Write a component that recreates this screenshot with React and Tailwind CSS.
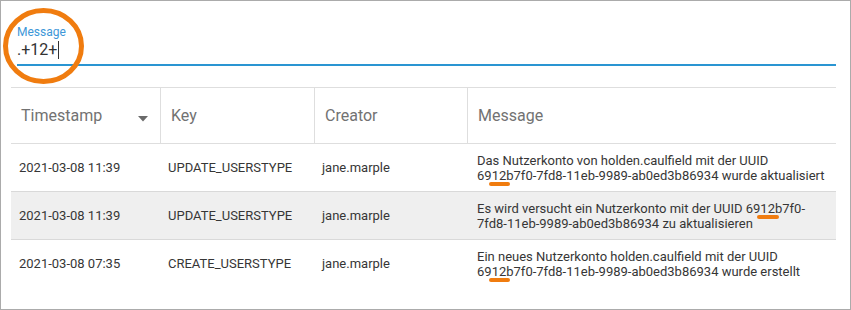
import React from "react";

const rows = [
  {
    ts: "2021-03-08 11:39",
    key: "UPDATE_USERSTYPE",
    creator: "jane.marple",
    lines: [
      ["Das Nutzerkonto von holden.caulfield mit der UUID"],
      ["69", "12", "b7f0-7fd8-11eb-9989-ab0ed3b86934 wurde aktualisiert"],
    ],
  },
  {
    ts: "2021-03-08 11:39",
    key: "UPDATE_USERSTYPE",
    creator: "jane.marple",
    lines: [
      ["Es wird versucht ein Nutzerkonto mit der UUID 69", "12", "b7f0-"],
      ["7fd8-11eb-9989-ab0ed3b86934 zu aktualisieren"],
    ],
  },
  {
    ts: "2021-03-08 07:35",
    key: "CREATE_USERSTYPE",
    creator: "jane.marple",
    lines: [
      ["Ein neues Nutzerkonto holden.caulfield mit der UUID"],
      ["69", "12", "b7f0-7fd8-11eb-9989-ab0ed3b86934 wurde erstellt"],
    ],
  },
];

// orange marker under the matched "12"
function Hit({ children }) {
  return (
    <span className="relative">
      {children}
      <span className="absolute left-[-3px] right-[-4px] top-[14px] h-[4px] rounded-full bg-[#f07c0f]" />
    </span>
  );
}

function Line({ parts }) {
  return (
    <span className="block whitespace-nowrap">
      {parts.map((p, i) => (i === 1 ? <Hit key={i}>{p}</Hit> : <span key={i}>{p}</span>))}
    </span>
  );
}

export default function App() {
  return (
    <div
      className="relative w-[851px] h-[310px] border border-[#ababab] bg-white overflow-hidden"
      style={{ fontFamily: "Roboto, 'Liberation Sans', sans-serif" }}
    >
      {/* SEARCH FIELD */}
      <div className="ml-[16px] mt-[24px] w-[819px] border-b-2 border-[#2a95d2] pb-[4px]">
        <div className="h-[14px] text-[12px] leading-[14px] text-[#3d97d8]">Message</div>
        <div className="mt-[1px] flex items-center h-[20px] text-[16px] leading-[20px] text-[#333]">
          .+12+
          <span className="inline-block w-[1px] h-[18px] bg-[#333] ml-[1px]" />
        </div>
      </div>

      {/* TABLE */}
      <div className="ml-[10px] mt-[21px] w-[825px]">
        <div className="grid grid-cols-[149px_154px_153px_369px] h-[57px] border-y border-[#dedede] text-[16px] text-[#727272]">
          <div className="flex items-center pl-[10px] pr-[12px] justify-between">
            <span>Timestamp</span>
            <svg width="10" height="6" viewBox="0 0 10 6" className="mt-[7px]">
              <path d="M0 0 L10 0 L5 5.5 Z" fill="#6a6a6a" />
            </svg>
          </div>
          <div className="flex items-center pl-[10px] border-l border-[#dedede]">Key</div>
          <div className="flex items-center pl-[10px] border-l border-[#dedede]">Creator</div>
          <div className="flex items-center pl-[10px] border-l border-[#dedede]">Message</div>
        </div>

        {rows.map((r, i) => (
          <div
            key={i}
            className={
              "grid grid-cols-[149px_154px_153px_369px] h-[48px] text-[13px] text-[#363636] " +
              (i === 1 ? "bg-[#efefef] " : "") +
              (i < 2 ? "border-b border-[#d9d9d9]" : "")
            }
          >
            <div className="flex items-center pl-[8px]">{r.ts}</div>
            <div className="flex items-center pl-[8px]">{r.key}</div>
            <div className="flex items-center pl-[8px]">{r.creator}</div>
            <div className="flex flex-col justify-center pl-[10px] leading-[15px]">
              {r.lines.map((l, j) => (
                <Line key={j} parts={l} />
              ))}
            </div>
          </div>
        ))}
      </div>

      {/* ANNOTATION CIRCLE */}
      <svg className="absolute left-0 top-0" width="90" height="90" viewBox="0 0 90 90">
        <ellipse cx="42.5" cy="45" rx="38" ry="35.5" fill="none" stroke="#f07c0f" strokeWidth="5" />
      </svg>
    </div>
  );
}
